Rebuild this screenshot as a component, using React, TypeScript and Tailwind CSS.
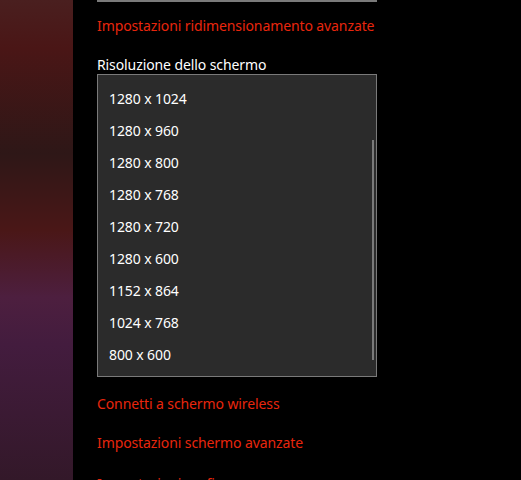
const resolutions = [
  "1280 x 1024",
  "1280 x 960",
  "1280 x 800",
  "1280 x 768",
  "1280 x 720",
  "1280 x 600",
  "1152 x 864",
  "1024 x 768",
  "800 x 600",
];

export default function App() {
  return (
    <div
      className="flex h-[480px] w-[521px] overflow-hidden bg-black text-[14px] tracking-[-0.1px]"
      style={{ fontFamily: '"Noto Sans", "Open Sans", sans-serif' }}
    >
      <div className="h-full w-[73px] shrink-0 bg-[linear-gradient(to_bottom,#4a1f1f_0%,#4a1616_10%,#2e1717_32%,#4a1717_48%,#4d1f3f_62%,#431c3e_72%,#331829_100%)]" />

      <div className="flex w-[280px] flex-col pl-[24px] box-content">
        <div className="h-[3px] border-x-2 border-b-2 border-[#7a7a7a]" />

        <a className="mt-[14px] whitespace-nowrap leading-[20px] text-[#e8260d]">
          Impostazioni ridimensionamento avanzate
        </a>

        <div className="mt-[19px] whitespace-nowrap leading-[20px] text-white">
          Risoluzione dello schermo
        </div>

        <div className="relative mt-[-1px] h-[303px] border border-[#7a7a7a] bg-[#2b2b2b] py-[7px]">
          {resolutions.map((r) => (
            <div key={r} className="flex h-[32px] items-center pl-[11px] text-white">
              {r}
            </div>
          ))}
          <div className="absolute right-[2px] top-[65px] h-[220px] w-[2px] bg-[#7a7a7a]" />
        </div>

        <a className="mt-[17px] whitespace-nowrap leading-[20px] text-[#e8260d]">
          Connetti a schermo wireless
        </a>
        <a className="mt-[19px] whitespace-nowrap leading-[20px] text-[#e8260d]">
          Impostazioni schermo avanzate
        </a>
        <a className="mt-[21px] whitespace-nowrap leading-[20px] text-[#e8260d]">
          Impostazioni grafica
        </a>
      </div>
    </div>
  );
}
